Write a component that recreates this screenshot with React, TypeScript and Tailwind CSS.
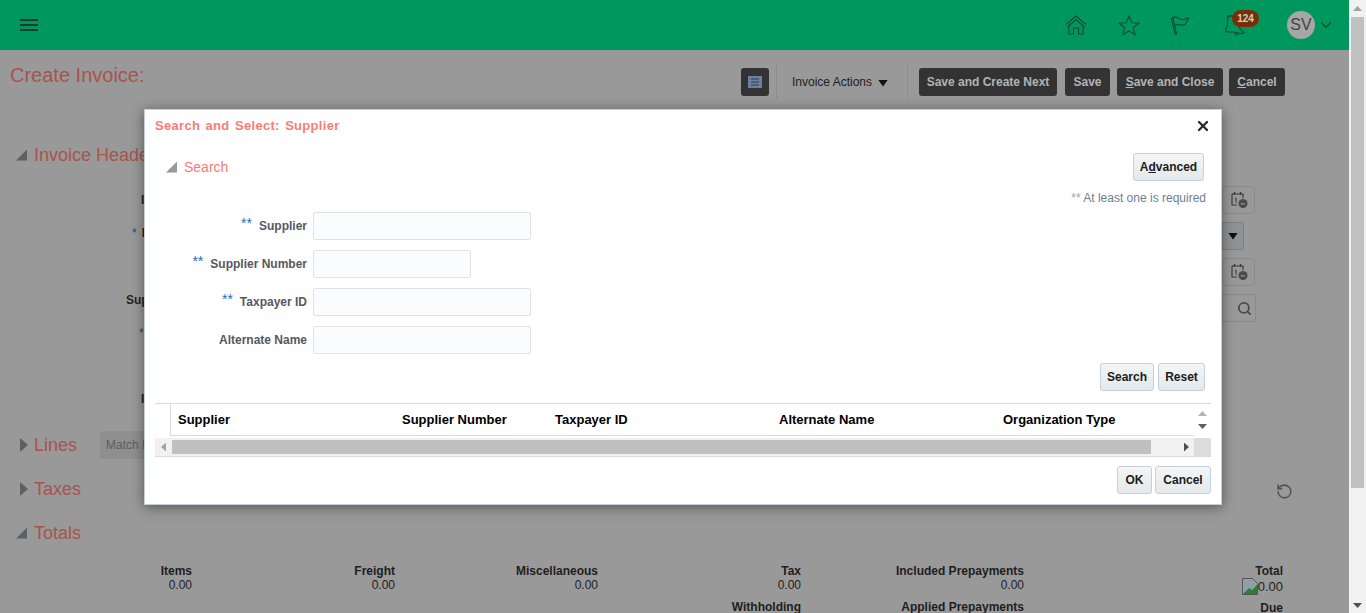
import { ChevronDown, RotateCcw, Search, X } from 'lucide-react';

const totalsRowOne = [
  { label: 'Items', value: '0.00' },
  { label: 'Freight', value: '0.00' },
  { label: 'Miscellaneous', value: '0.00' },
  { label: 'Tax', value: '0.00' },
  { label: 'Included Prepayments', value: '0.00' },
];

const columns = [
  { name: 'Supplier', width: 'w-[224px]' },
  { name: 'Supplier Number', width: 'w-[153px]' },
  { name: 'Taxpayer ID', width: 'w-[224px]' },
  { name: 'Alternate Name', width: 'w-[224px]' },
  { name: 'Organization Type', width: 'w-[184px]' },
];

const searchFields = [
  { label: 'Supplier', required: true, width: 'w-[218px]' },
  { label: 'Supplier Number', required: true, width: 'w-[158px]' },
  { label: 'Taxpayer ID', required: true, width: 'w-[218px]' },
  { label: 'Alternate Name', required: false, width: 'w-[218px]' },
];

const CalendarIcon = () => (
  <svg width="17" height="18" viewBox="0 0 17 18" fill="none">
    <path d="M1 3h11v4M1 3v11h5" stroke="#3c3c3c" strokeWidth="1.2" />
    <path d="M3.500 1v3M9.500 1v3" stroke="#3c3c3c" strokeWidth="1.5" />
    <path d="M4 7.500 5 7v5" stroke="#3c3c3c" strokeWidth="1" />
    <circle cx="12" cy="12.500" r="4.500" fill="#4a4a4a" />
    <path d="M9.800 12.800h4" stroke="#999" strokeWidth="1.200" />
  </svg>
);

const DialogButton = ({ className = '', children }: { className?: string; children: React.ReactNode }) => (
  <button className={`flex h-[28px] items-center justify-center rounded-[3px] border border-[#c6d0d8] bg-gradient-to-b from-[#f3f5f6] to-[#e5e9ec] text-[12px] font-bold text-[#1c1c1c] ${className}`}>
    {children}
  </button>
);

const ToolbarButton = ({ className = '', children }: { className?: string; children: React.ReactNode }) => (
  <button className={`flex h-[28px] items-center justify-center rounded-[3px] bg-[#333333] text-[12px] font-bold text-[#b3b3b3] ${className}`}>
    {children}
  </button>
);

const SectionTitle = ({ open, title, className = '' }: { open?: boolean; title: string; className?: string }) => (
  <div className={`flex shrink-0 items-center text-[18px] leading-[22px] text-[#a8544d] ${className}`}>
    <span className="flex w-[34px] justify-end pr-[7px]">
      {open ? (
        <span className="h-[11px] w-[11px] bg-[#5d5f62] [clip-path:polygon(100%_0,100%_100%,0_100%)]" />
      ) : (
        <span className="mr-[-1px] h-[14px] w-[8px] bg-[#5d5f62] [clip-path:polygon(0_0,100%_50%,0_100%)]" />
      )}
    </span>
    {title}
  </div>
);

const AppHeader = () => (
  <header className="flex h-[50px] shrink-0 items-center bg-[#00975e] pl-[20px]">
    <div className="flex w-[18px] flex-col gap-[3px]">
      <span className="h-[2px] bg-[#133b30]" />
      <span className="h-[2px] bg-[#133b30]" />
      <span className="h-[2px] bg-[#133b30]" />
    </div>
    <div className="ml-auto flex items-center pr-[14px] text-[#14493a]">
      <svg width="22" height="20" viewBox="0 0 22 20" fill="none" stroke="currentColor" strokeWidth="1.100">
        <path d="M1 9.500 11 1l10 8.500M2.500 12 11 4.500l8.500 7.500" />
        <path d="M4 11v8h4.500v-6h5v6H18v-8" />
      </svg>
      <svg className="ml-[31px]" width="22" height="21" viewBox="0 0 22 21" fill="none" stroke="currentColor" strokeWidth="1.100">
        <path d="m11 1 2.700 6.800 7.100.4-5.500 4.600 1.800 7-6.100-3.900-6.100 3.900 1.800-7-5.500-4.600 7.100-.4z" />
      </svg>
      <svg className="ml-[30px]" width="20" height="20" viewBox="0 0 20 20" fill="none" stroke="currentColor" strokeWidth="1.100">
        <path d="M1.500 3.500 5 19h1.500L3 3z" />
        <path d="M2.500 2.500C7 .5 9 5 13 4.500c2-.2 4-1 5.500-1.500-1 2.500-2.500 5-3.500 6.500-3 2-6-1.500-10.500 1" />
      </svg>
      <div className="relative ml-[34px] h-[22px] w-[22px]">
        <svg width="24" height="22" viewBox="0 0 24 22" fill="none" stroke="currentColor" strokeWidth="1.100">
          <path d="M3.500 4.500c1-2 3.500-3 5.500-2L17 16l3 3-3 .5L9 18H4c-2 0-3-1.500-2-3l1.500-4z" />
          <path d="M3.500 4.500C3 3 4 1.500 5.500 1.500S8 2 9 2.500M11 19c.5 1.500 2 2 3.500 1" />
        </svg>
        <span className="absolute left-[8px] top-[-4px] flex h-[17px] w-[27px] items-center justify-center rounded-full bg-[#7a2e06] text-[10px] font-bold text-[#cfcfcf]">
          124
        </span>
      </div>
      <span className="ml-[41px] flex h-[28px] w-[28px] items-center justify-center rounded-full bg-[#a6a6a6] text-[16px] text-[#444444]">
        SV
      </span>
      <ChevronDown className="ml-[2px] text-[#14493a]" size={18} strokeWidth={1.500} />
    </div>
  </header>
);

const BackgroundPage = () => (
  <main className="flex w-[1349px] shrink-0 flex-col bg-[#999999]">
    <AppHeader />
    <div className="flex h-[50px] shrink-0 items-start justify-between pl-[10px] pr-[64px] pt-[18px]">
      <h1 className="mt-[-5px] text-[20px] leading-[24px] text-[#a8544d]">Create Invoice:</h1>
      <div className="mt-[-6px] flex items-center">
        <ToolbarButton className="w-[28px]">
          <svg width="14" height="12" viewBox="0 0 14 12">
            <rect width="14" height="12" fill="#6f7f9e" />
            <path d="M3 3h8M3 6h8M3 9h8" stroke="#2f3a52" strokeWidth="1" />
          </svg>
        </ToolbarButton>
        <span className="ml-[7px] h-[34px] w-px bg-[#8d8d8d]" />
        <span className="ml-[15px] flex items-center text-[12px] text-[#1e1e1e]">
          Invoice Actions
          <span className="ml-[6px] mt-[2px] h-[7px] w-[10px] bg-[#111111] [clip-path:polygon(0_0,100%_0,50%_100%)]" />
        </span>
        <span className="ml-[19px] h-[40px] w-px bg-[#8d8d8d]" />
        <ToolbarButton className="ml-[11px] w-[138px]">Save and Create Next</ToolbarButton>
        <ToolbarButton className="ml-[8px] w-[45px]">Save</ToolbarButton>
        <ToolbarButton className="ml-[7px] w-[106px]"><span><u>S</u>ave and Close</span></ToolbarButton>
        <ToolbarButton className="ml-[6px] w-[56px]"><span><u>C</u>ancel</span></ToolbarButton>
      </div>
    </div>

    <SectionTitle open title="Invoice Header" className="mt-[44px]" />

    <div className="mt-[20px] grid h-[237px] shrink-0 grid-cols-[1fr_auto] pr-[94px]">
      <div className="flex flex-col whitespace-nowrap text-[12px] font-bold leading-[28px] text-[#222222]">
        <div className="h-[28px] pl-[141px]">Identifying PO</div>
        <div className="mt-[5px] h-[28px] pl-[132px]"><span className="mr-[5px] font-normal text-[#1e4a70]">*</span>Invoice Group</div>
        <div className="mt-[39px] h-[28px] pl-[126px]">Supplier</div>
        <div className="mt-[5px] h-[28px] pl-[139px]"><span className="mr-[5px] font-normal text-[#1e4a70]">*</span>Supplier Site</div>
        <div className="mt-[38px] h-[28px] pl-[141px]">Invoice Number</div>
      </div>
      <div className="flex flex-col items-end">
        <div className="flex h-[28px] w-[33px] items-center justify-end rounded-[3px] border border-[#8a8a8a] pr-[6px]"><CalendarIcon /></div>
        <div className="mr-[11px] mt-[8px] flex h-[28px] w-[22px] items-center justify-center rounded-r-[3px] border border-[#7e8286] bg-[#8f9294]">
          <span className="h-[7px] w-[10px] bg-[#111111] [clip-path:polygon(0_0,100%_0,50%_100%)]" />
        </div>
        <div className="mt-[8px] flex h-[28px] w-[33px] items-center justify-end rounded-[3px] border border-[#8a8a8a] pr-[6px]"><CalendarIcon /></div>
        <div className="mr-[-1px] mt-[8px] flex h-[28px] w-[34px] items-center justify-end rounded-r-[3px] border border-[#8a8a8a] pr-[3px]">
          <Search size={15} strokeWidth={3} className="text-[#4c4c4c]" />
        </div>
      </div>
    </div>

    <div className="flex h-[44px] shrink-0 items-center">
      <SectionTitle title="Lines" />
      <span className="ml-[23px] flex h-[28px] w-[80px] items-center rounded-[3px] bg-[#8f8f8f] pl-[6px] text-[12px] text-[#5e5e5e]">Match I</span>
    </div>
    <div className="flex h-[44px] shrink-0 items-center justify-between pr-[56px]">
      <SectionTitle title="Taxes" />
      <RotateCcw size={17} strokeWidth={2.200} className="mt-[5px] text-[#555555]" />
    </div>
    <SectionTitle open title="Totals" className="mt-[11px]" />

    <div className="mt-[20px] flex shrink-0 pr-[66px] text-[12px] leading-[14px] text-[#1e1e1e]">
      <div className="flex">
        {totalsRowOne.map((item, i) => (
          <div key={item.label} className={`text-right ${i === 0 ? 'w-[192px]' : i === 1 ? 'ml-[103px] w-[100px]' : i === 2 ? 'ml-[103px] w-[100px]' : i === 3 ? 'ml-[103px] w-[100px]' : 'ml-[23px] w-[200px]'}`}>
            <div className="font-bold">{item.label}</div>
            <div>{item.value}</div>
            {i === 3 && <div className="mt-[8px] font-bold">Withholding</div>}
            {i === 4 && <div className="mt-[8px] font-bold">Applied Prepayments</div>}
          </div>
        ))}
      </div>
      <div className="ml-auto text-right">
        <div className="font-bold">Total</div>
        <div className="flex items-center justify-end">
          <svg width="16" height="17" viewBox="0 0 16 17">
            <path d="M.5.500h10l5 5v11H.5z" fill="#8fa0a8" stroke="#555" />
            <path d="M1 16l6-6 3 2 5-5v9z" fill="#2e7d32" />
          </svg>
          <span className="text-[13px]">0.00</span>
        </div>
        <div className="mt-[6px] font-bold">Due</div>
      </div>
    </div>
  </main>
);

const SupplierDialog = () => (
  <section className="absolute left-[144px] top-[109px] flex h-[396px] w-[1078px] flex-col border border-[#c4d0db] bg-white shadow-[0_2px_12px_rgba(0,0,0,0.45)]">
    <div className="flex h-[30px] items-center justify-between pl-[10px] pr-[10px] pt-[1px]">
      <h2 className="text-[13px] font-bold tracking-[0.3px] text-[#fb7c73] [word-spacing:1.500px]">Search and Select: Supplier</h2>
      <X size={16} strokeWidth={3.500} className="text-[#2a2a2a]" />
    </div>

    <div className="flex h-[29px] items-start justify-between pl-[21px] pr-[17px] pt-[13px]">
      <div className="flex h-[28px] items-center text-[14px] text-[#fb7c73]">
        <span className="mr-[7px] h-[11px] w-[11px] bg-[#979a9d] [clip-path:polygon(100%_0,100%_100%,0_100%)]" />
        Search
      </div>
      <DialogButton className="w-[71px]"><span>A<u>d</u>vanced</span></DialogButton>
    </div>

    <p className="mt-[22px] pr-[15px] text-right text-[12px] leading-[14px] text-[#6e7f8e]"><span className="text-[#9aa5af]">**</span> At least one is required</p>

    <div className="mt-[7px] flex flex-col gap-[10px]">
      {searchFields.map((field) => (
        <div key={field.label} className="flex items-center">
          <div className="flex w-[162px] items-center justify-end text-[12px] font-bold text-[#545960]">
            {field.required && <span className="mb-[6px] mr-[7px] text-[14px] font-normal text-[#1d6fb5]">**</span>}
            {field.label}
          </div>
          <input className={`ml-[6px] h-[28px] rounded-[2px] border border-[#dfe4e8] bg-[#fbfcfe] ${field.width}`} />
        </div>
      ))}
    </div>

    <div className="mt-[9px] flex justify-end gap-[4px] pr-[16px]">
      <DialogButton className="w-[54px]">Search</DialogButton>
      <DialogButton className="w-[47px]">Reset</DialogButton>
    </div>

    <div className="ml-[10px] mr-[10px] mt-[12px] border-y border-[#d3dde5]">
      <div className="flex h-[32px]">
        <div className="w-[16px] shrink-0 border-r border-[#d3dde5]" />
        <div className="flex flex-1 items-center border-b border-[#d3dde5] pl-[7px]">
          {columns.map((col) => (
            <div key={col.name} className={`shrink-0 text-[13px] font-bold text-black ${col.width}`}>{col.name}</div>
          ))}
        </div>
        <div className="flex w-[17px] shrink-0 flex-col items-center justify-between bg-white py-[7px]">
          <span className="h-[5px] w-[9px] bg-[#b4b4b4] [clip-path:polygon(50%_0,100%_100%,0_100%)]" />
          <span className="h-[5px] w-[9px] bg-[#5f5f5f] [clip-path:polygon(0_0,100%_0,50%_100%)]" />
        </div>
      </div>
      <div className="mt-[2px] flex h-[18px] bg-[#f1f1f1]">
        <div className="flex w-[17px] shrink-0 items-center justify-center">
          <span className="h-[9px] w-[5px] bg-[#a3a3a3] [clip-path:polygon(100%_0,100%_100%,0_50%)]" />
        </div>
        <div className="my-[2px] w-[979px] bg-[#c0c0c0]" />
        <div className="flex flex-1 items-center justify-end pr-[5px]">
          <span className="h-[9px] w-[5px] bg-[#505050] [clip-path:polygon(0_0,100%_50%,0_100%)]" />
        </div>
        <div className="w-[17px] shrink-0 bg-[#dcdcdc]" />
      </div>
    </div>

    <div className="mt-[9px] flex justify-end gap-[3px] pr-[10px]">
      <DialogButton className="w-[35px]">OK</DialogButton>
      <DialogButton className="w-[56px]">Cancel</DialogButton>
    </div>
  </section>
);

export default function App() {
  return (
    <div className="relative flex h-[613px] w-[1366px] overflow-hidden bg-white font-['Liberation_Sans',Arial,sans-serif]">
      <BackgroundPage />
      <div className="flex w-[17px] flex-col items-center bg-[#f1f1f1]">
        <span className="mt-[6px] h-[5px] w-[9px] bg-[#a3a3a3] [clip-path:polygon(50%_0,100%_100%,0_100%)]" />
        <span className="mt-[6px] h-[471px] w-[13px] bg-[#c1c1c1]" />
        <span className="mt-auto mb-[5px] h-[5px] w-[9px] bg-[#505050] [clip-path:polygon(0_0,100%_0,50%_100%)]" />
      </div>
      <SupplierDialog />
    </div>
  );
}
